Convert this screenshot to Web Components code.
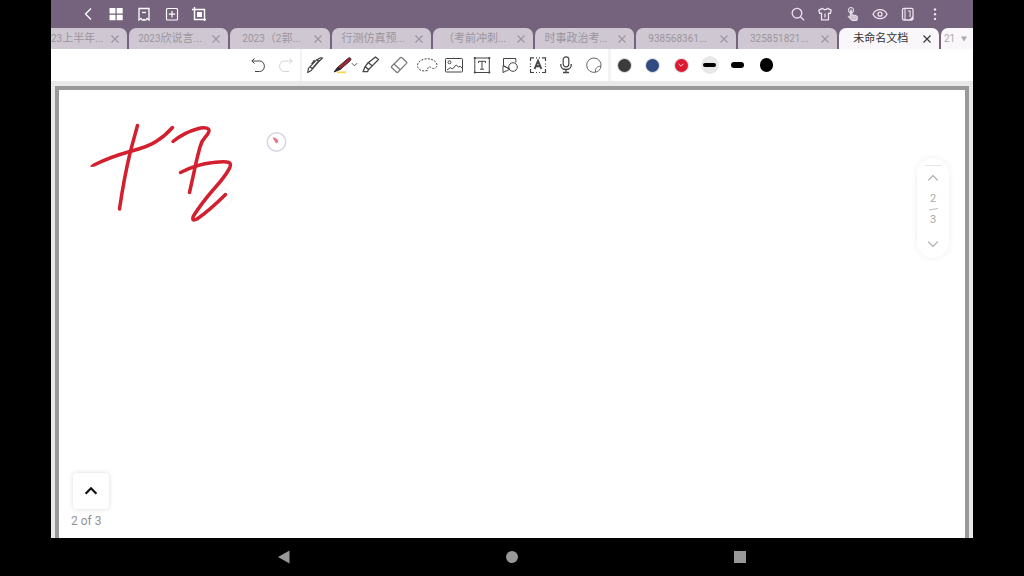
<!DOCTYPE html>
<html lang="zh-CN">
<head>
<meta charset="utf-8">
<meta name="viewport" content="width=device-width, initial-scale=1">
<title>未命名文档</title>
<style>
  body { margin: 0; background: #000; font-family: Roboto, "Noto Sans CJK SC", sans-serif; }
</style>
</head>
<body>
<note-app></note-app>
<script>
const ICONS = {
  back: '<path d="M12 4.5 6.5 10l5.500 5.500" stroke-width="1.300"/>',
  grid: '<g fill="currentColor" stroke="none"><rect x="3.500" y="4" width="6" height="5.500" rx=".6"/><rect x="10.700" y="4" width="6" height="5.500" rx=".6"/><rect x="3.500" y="10.800" width="6" height="5.500" rx=".6"/><rect x="10.700" y="10.800" width="6" height="5.500" rx=".6"/></g>',
  bookmark: '<path d="M5 4.500h10v11.500l-2-1.500c-1 2-2 2-3 1-1 1-2 1-3-1L5 16z" stroke-width="1.300"/><path d="M8 8.500h4" stroke-width="1.300"/>',
  add: '<rect x="4.500" y="4.500" width="11" height="11.500" rx="1" stroke-width="1.200"/><path d="M10 7v6.500M6.800 10.200h6.400" stroke-width="1.200"/>',
  crop: '<path d="M5.500 3v12.500H17M3 5.500h12.500V17" stroke-width="1.400"/><rect x="8" y="8" width="5" height="5" fill="currentColor" stroke="none"/>',
  search: '<circle cx="9" cy="9.200" r="4.800" stroke-width="1.300"/><path d="m12.500 12.700 3.500 3.500" stroke-width="1.300"/>',
  shirt: '<path d="M7.500 4.300 3.800 6.200 4.600 9.400l1.900-.3v6.700h7V9.100l1.900.3.800-3.200-3.700-1.900c-.8 1.900-4.200 1.900-5 0zM10 9.500v4" stroke-width="1.300" stroke-linejoin="round"/>',
  touch: '<circle cx="8" cy="6.200" r="2.700" stroke-width="1"/><path d="M7.300 6.500c0-1 1.500-1 1.500 0v4.200l4.500 1c1 .3 1.400.9 1.200 1.800l-.6 3H8.800l-3.600-3.800c.6-.7 1.200-.6 2.100.1z" fill="currentColor" fill-opacity=".75" stroke-width="1"/>',
  eye: '<path d="M3 10.200c3-6 11-6 14 0-3 5.800-11 5.800-14 0z" stroke-width="1.300"/><circle cx="10" cy="10.200" r="2" stroke-width="1.300"/>',
  book: '<rect x="4.500" y="4.300" width="10.500" height="11.700" rx="1.400" stroke-width="1.300"/><path d="M7 4.500V16M9.800 7h2.300v6" stroke-width="1.100"/><path d="m11 16 4-4v4z" fill="currentColor" stroke="none"/>',
  more: '<g fill="currentColor" stroke="none"><circle cx="10" cy="5.500" r="1.200"/><circle cx="10" cy="10.200" r="1.200"/><circle cx="10" cy="14.900" r="1.200"/></g>',
  undo: '<path d="M6.500 3.500 3.800 6l2.700 2.500M4 6h7.500c6.500 0 6.500 10.500 0 10.500H7"/>',
  redo: '<path d="m13.500 3.500 2.700 2.500-2.700 2.500M16 6H8.500C2 6 2 16.500 8.500 16.500H13"/>',
  pencil: '<path d="m2.700 17.500.8-4.100 8.300-8.800 2 2-8 9.200zM5.300 11.800l1.700 1.700M9.500 4.800l-3 4.600M12 4.800l3.500-2 2 .2-3.600 3.600M7 14 14.500 5" stroke-linejoin="round" stroke-width="1.200"/>',
  pen: '<path d="M4 17.300h9" stroke="#f7d848" stroke-width="1.800"/><path d="m4.500 12.500 3 1.800 9.700-8.500c2-2-.4-4-2.200-2.400z" fill="#9b2638" stroke="#3b2830"/><path d="m1 17 3.500-4.500 3 1.800z" fill="#29242a" stroke="#29242a"/>',
  marker: '<path d="M2 16.700 4.200 11.500l3.300 3-1 2.200zM4.500 11.200l2.800-3.700 4 3.400-3.700 3.600M7.500 7.500 14.500 2l3 2.500-6.200 6.400" stroke-linejoin="round" stroke-width="1.300"/>',
  eraser: '<path d="m2.500 11.500 9-9q.6-.5 1.200 0l5 4.700q.4.500 0 1l-8.800 9q-.7.600-1.300 0l-5-4.700q-.5-.5-.1-1zM5 9l6.500 6" stroke="#777" stroke-width="1.200"/>',
  lasso: '<path d="M10.500 15.500C5 17 .5 14.500.5 10.500s5-6.700 10-6.700 9.500 2.700 9.500 6.400c0 3.300-4.500 4.300-6.500 2-1.500-1-3.500.4-2.500 2.200" stroke-dasharray="2 1.300"/>',
  image: '<rect x="1.500" y="3.500" width="17" height="13.500" rx=".8"/><circle cx="5.500" cy="7.300" r="1.500"/><path d="m3 15 3.300-2.300 2.300 1.200 3.600-3.900 2.300 2 1.800-.6 2.200 2"/>',
  type: '<rect x="2.800" y="3" width="14.500" height="14.500"/><path d="M6.500 8V6.300h7V8M10 6.300V14M8 14.200h4"/><g fill="currentColor" stroke="none"><circle cx="2.800" cy="3" r="1.100"/><circle cx="17.300" cy="3" r="1.100"/><circle cx="2.800" cy="17.500" r="1.100"/><circle cx="17.300" cy="17.500" r="1.100"/></g>',
  shapes: '<path d="M3.500 10.500V3.500h12.300v4M3 10.500v7l6.800-3.300zM9.500 14 3 10.500"/><circle cx="13" cy="12" r="4.300"/>',
  scan: '<path d="M2.500 6V2.800H6M14 2.800h3.500V6M17.500 14v3.500H14M6 17.500H2.500V14M8 2.800h1M11 2.800h1M8 17.500h1M11 17.500h1M2.500 8.500v1M2.500 11v1M17.500 8.500v1M17.500 11v1" stroke-width="1.200"/><path d="m6.600 14 3.400-8.200 3.400 8.200M7.500 11.300h5" stroke-width="1.900"/>',
  mic: '<rect x="7.200" y="1.800" width="5.600" height="10" rx="2.800" stroke-width="1.200"/><path d="M4.800 9v1c0 6 10.400 6 10.400 0V9M10 14.500v3M7 17.500h6" stroke-width="1.300"/>',
  sticker: '<path d="M11.500 17.200A7.200 7.200 0 1 1 17 11.300c-3.500-.5-6 2-5.500 5.900zM17 11.500c-.7 3.300-2.500 5-5.500 5.700" stroke="#666"/>',
  up: '<path d="m4 13 6-6 6 6"/>',
  down: '<path d="m4 7 6 6 6-6"/>',
  close: '<path d="m5 5 10 10M15 5 5 15"/>',
  caret: '<path d="M5 6h10l-5 8z" fill="currentColor" stroke="none"/>'
};

const define = (name, html, setup) => {
  const template = document.createElement('template');
  template.innerHTML = html;
  customElements.define(name, class extends HTMLElement {
    connectedCallback() {
      if (this.shadowRoot) return;
      this.attachShadow({ mode: 'open' }).append(template.content.cloneNode(true));
      if (setup) setup(this, this.shadowRoot);
    }
  });
};

define('note-icon', `
  <style>
    :host { display: block; width: 20px; height: 20px; flex: none; }
    svg { display: block; width: 100%; height: 100%; overflow: visible; fill: none; stroke: currentColor; }
  </style>
  <svg viewBox="0 0 20 20" aria-hidden="true"></svg>`,
  (host, root) => { root.querySelector('svg').innerHTML = ICONS[host.getAttribute('name')]; });

define('icon-button', `
  <style>
    :host { display: flex; flex: 1; min-width: 0; }
    button { all: unset; flex: 1; display: flex; align-items: center; justify-content: center; cursor: pointer; }
  </style>
  <button type="button"></button>`,
  (host, root) => {
    const icon = document.createElement('note-icon');
    icon.setAttribute('name', host.getAttribute('icon'));
    const button = root.querySelector('button');
    button.append(icon);
    button.setAttribute('aria-label', host.getAttribute('label'));
  });

define('title-bar', `
  <style>
    :host { display: flex; justify-content: space-between; height: 28px; padding: 0 24px; background: #75637d; color: #fff; }
    div { display: flex; }
    .left { width: 138px; }
    .right { width: 165px; color: #eee3f0; }
  </style>
  <div class="left">
    <icon-button icon="back" label="返回"></icon-button>
    <icon-button icon="grid" label="缩略图"></icon-button>
    <icon-button icon="bookmark" label="书签"></icon-button>
    <icon-button icon="add" label="添加页面"></icon-button>
    <icon-button icon="crop" label="裁剪"></icon-button>
  </div>
  <div class="right">
    <icon-button icon="search" label="搜索"></icon-button>
    <icon-button icon="shirt" label="主题"></icon-button>
    <icon-button icon="touch" label="手势"></icon-button>
    <icon-button icon="eye" label="阅读"></icon-button>
    <icon-button icon="book" label="笔记本"></icon-button>
    <icon-button icon="more" label="更多"></icon-button>
  </div>`);

define('doc-tab', `
  <style>
    :host { display: flex; min-width: 0; box-sizing: border-box; padding: 0 5px 0 2px; background: #cfc8d2; color: #9b959e;
            border-radius: 7px 7px 0 0; font-size: 11px; line-height: 22px; white-space: nowrap; }
    :host([active]) { background: #f9f7fa; color: #333; }
    :host([partial]) { padding-left: 24px; }
    :host([partial]) .title { text-align: left; }
    button { all: unset; cursor: pointer; }
    .title { flex: 1; min-width: 0; text-align: center; }
    .close { display: flex; align-items: center; }
    note-icon { width: 14px; height: 14px; stroke-width: 1.6; }
  </style>
  <button type="button" class="title"><slot></slot></button>
  <button type="button" class="close" aria-label="关闭"><note-icon name="close"></note-icon></button>`);

define('tab-strip', `
  <style>
    :host { display: flex; gap: 2px; height: 21px; overflow: hidden; background: #75637d; }
    .tabs { display: grid; grid-template-columns: repeat(9, minmax(0, 1fr)); flex: 1; gap: 2px; min-width: 0; margin-left: -24px; }
    .count { all: unset; display: flex; align-items: center; gap: 3px; width: 32px; box-sizing: border-box; padding-left: 3px;
             background: #f9f7fa; color: #aaa; font-size: 10px; border-radius: 7px 0 0 0; cursor: pointer; }
    .count note-icon { width: 12px; height: 12px; }
    doc-tab span { font-size: 10px; }
  </style>
  <div class="tabs">
    <doc-tab partial><span>23</span>上半年<span>...</span></doc-tab>
    <doc-tab><span>2023</span>欣说言<span>...</span></doc-tab>
    <doc-tab><span>2023</span>（<span>2</span>郭<span>...</span></doc-tab>
    <doc-tab>行测仿真预<span>...</span></doc-tab>
    <doc-tab>（考前冲刺<span>...</span></doc-tab>
    <doc-tab>时事政治考<span>...</span></doc-tab>
    <doc-tab><span>938568361...</span></doc-tab>
    <doc-tab><span>325851821...</span></doc-tab>
    <doc-tab active>未命名文档</doc-tab>
  </div>
  <button type="button" class="count">21<note-icon name="caret"></note-icon></button>`);

define('color-dot', `
  <style>
    :host { display: flex; flex: 1; }
    button { all: unset; flex: 1; display: flex; align-items: center; justify-content: center; cursor: pointer; }
    i { display: flex; align-items: center; justify-content: center; width: 13px; height: 13px; border-radius: 50%;
        background: var(--ink); box-shadow: 0 0 0 1px #ddd; color: #fff; }
    note-icon { width: 8px; height: 8px; stroke-width: 2; }
    :host(:not([current])) note-icon { display: none; }
  </style>
  <button type="button"><i><note-icon name="down"></note-icon></i></button>`,
  (host, root) => root.querySelector('button').setAttribute('aria-label', host.getAttribute('label')));

define('stroke-width', `
  <style>
    :host { display: flex; flex: 1; align-items: center; justify-content: center; }
    button { all: unset; display: flex; align-items: center; justify-content: center; width: 18px; height: 18px; border-radius: 50%; cursor: pointer; }
    :host([current]) button { background: #e8e8e8; }
    i { width: 13px; height: 4px; border-radius: 2px; background: #000; }
    :host([size="medium"]) i { height: 6px; border-radius: 3px; }
    :host([size="large"]) i { height: 14px; border-radius: 7px; }
  </style>
  <button type="button"><i></i></button>`,
  (host, root) => root.querySelector('button').setAttribute('aria-label', host.getAttribute('label')));

define('tool-bar', `
  <style>
    :host { display: flex; justify-content: center; height: 32px; background: #fff; color: #444; }
    div { display: flex; }
    .history { width: 56px; }
    .tools { width: 306px; border: solid #f3f3f3; border-width: 0 3px 0 2px; }
    .ink { width: 170px; }
    .faded { color: #d2d2d2; }
    .pen-group { position: relative; flex: 1; }
    .pen-group note-icon { position: absolute; right: -2px; top: 11px; width: 9px; height: 9px; stroke-width: 2; }
  </style>
  <div class="history">
    <icon-button icon="undo" label="撤销"></icon-button>
    <icon-button icon="redo" label="重做" class="faded"></icon-button>
  </div>
  <div class="tools">
    <icon-button icon="pencil" label="铅笔"></icon-button>
    <div class="pen-group"><icon-button icon="pen" label="钢笔"></icon-button><note-icon name="down"></note-icon></div>
    <icon-button icon="marker" label="荧光笔"></icon-button>
    <icon-button icon="eraser" label="橡皮擦"></icon-button>
    <icon-button icon="lasso" label="套索"></icon-button>
    <icon-button icon="image" label="图片"></icon-button>
    <icon-button icon="type" label="文本"></icon-button>
    <icon-button icon="shapes" label="图形"></icon-button>
    <icon-button icon="scan" label="文字识别"></icon-button>
    <icon-button icon="mic" label="录音"></icon-button>
    <icon-button icon="sticker" label="贴纸"></icon-button>
  </div>
  <div class="ink">
    <color-dot style="--ink:#3c3a3c" label="黑色"></color-dot>
    <color-dot style="--ink:#314b82" label="蓝色"></color-dot>
    <color-dot style="--ink:#dc1931" label="红色" current></color-dot>
    <stroke-width size="small" label="细" current></stroke-width>
    <stroke-width size="medium" label="中"></stroke-width>
    <stroke-width size="large" label="粗"></stroke-width>
  </div>`);

define('page-pager', `
  <style>
    :host { display: flex; flex-direction: column; align-items: center; box-sizing: border-box; width: 32px; height: 100px; padding: 7px 0 6px;
            border-radius: 16px; background: #fff; box-shadow: 0 0 7px #00000012; color: #aaa; font-size: 11px; line-height: 14px; }
    .grip { width: 16px; height: 1px; background: #e4e4e4; margin-bottom: 4px; }
    button { all: unset; cursor: pointer; }
    note-icon { width: 16px; height: 16px; stroke-width: 1.5; }
    .pages { flex: 1; display: flex; flex-direction: column; align-items: center; padding-top: 6px; }
    svg { display: block; width: 9px; height: 7px; fill: none; stroke: #bbb; }
  </style>
  <div class="grip"></div>
  <button type="button" aria-label="上一页"><note-icon name="up"></note-icon></button>
  <div class="pages"><span>2</span><svg viewBox="0 0 9 7" aria-hidden="true"><path d="m0 4 9-1.500"/></svg><span>3</span></div>
  <button type="button" aria-label="下一页"><note-icon name="down"></note-icon></button>`);

define('page-canvas', `
  <style>
    :host { display: flex; flex: 1; padding: 5px 4px 0; background: #e9e9e9; }
    .sheet { position: relative; flex: 1; border: solid #999; border-width: 4px 4px 0; background: #fff; }
    .drawing { position: absolute; left: 0; top: 0; width: 240px; height: 140px; fill: none; stroke: #d3202f; stroke-width: 3.5; stroke-linecap: round; stroke-linejoin: round; }
    page-pager { position: absolute; right: 16px; top: 68px; }
    .corner { position: absolute; left: 12px; bottom: 9px; display: flex; flex-direction: column; gap: 4px; color: #949494; font-size: 12px; line-height: 16px; }
    button { all: unset; display: flex; align-items: center; justify-content: center; width: 36px; height: 36px; margin-left: 2px;
             border-radius: 4px; background: #fff; box-shadow: 0 0 5px #00000026; color: #111; cursor: pointer; }
    button note-icon { width: 18px; height: 18px; stroke-width: 2.5; }
  </style>
  <main class="sheet">
    <svg class="drawing" viewBox="59 90 240 140" role="img" aria-label="手写笔迹">
      <circle cx="223" cy="198" r="9" stroke="#f9f3f3" stroke-width="1"/>
      <path d="M94 165Q110 157 130 151.500T156 141.500Q165 136 172.500 127.500"/>
      <path d="M91.500 166 96 164" stroke-width="2"/>
      <path d="M137.500 125.500 130.500 151Q124 178 119.500 209"/>
      <path d="M173 141.500Q184 132.500 197 129C205 126.500 211 128 208.500 132.500C206 138 202.500 137 200 147Q196 162 194.500 170L189.500 192.500"/>
      <path d="M180.500 172.500Q197 164 213 162.500C229 160.500 233.500 161.500 228.500 170Q224 178 213 190Q201 204 193.500 216Q191 222 197 219Q210 210 225.500 194.500"/>
      <circle cx="276.500" cy="142" r="9.200" stroke="#d5d5e3" stroke-width="1.500"/>
      <path d="m272.500 137.500c3-.5 5.500 1.500 6 4.500l-2.500 1.500z" stroke="none" fill="#e27c8b"/>
    </svg>
    <page-pager></page-pager>
    <div class="corner">
      <button type="button" aria-label="展开"><note-icon name="up"></note-icon></button>
      <span>2 of 3</span>
    </div>
  </main>`);

define('system-nav', `
  <style>
    :host { display: flex; justify-content: center; height: 38px; background: #000; }
    nav { display: flex; width: calc(100% * 2 / 3); }
    button { all: unset; flex: 1; display: flex; align-items: center; justify-content: center; cursor: pointer; }
    svg { width: 14px; height: 14px; fill: #989898; }
  </style>
  <nav>
    <button type="button" aria-label="返回"><svg viewBox="0 0 14 14"><path d="M1 7 12.500.500v13z"/></svg></button>
    <button type="button" aria-label="主页"><svg viewBox="0 0 14 14"><circle cx="7" cy="7" r="6"/></svg></button>
    <button type="button" aria-label="最近"><svg viewBox="0 0 14 14"><rect x="1" y="1" width="12" height="12"/></svg></button>
  </nav>`);

define('note-app', `
  <style>
    :host { display: flex; flex-direction: column; min-height: 100vh; }
    .screen { flex: 1; display: flex; flex-direction: column; margin: 0 51px; overflow: hidden; }
  </style>
  <div class="screen">
    <title-bar></title-bar>
    <tab-strip></tab-strip>
    <tool-bar></tool-bar>
    <page-canvas></page-canvas>
  </div>
  <system-nav></system-nav>`);
</script>
</body>
</html>
